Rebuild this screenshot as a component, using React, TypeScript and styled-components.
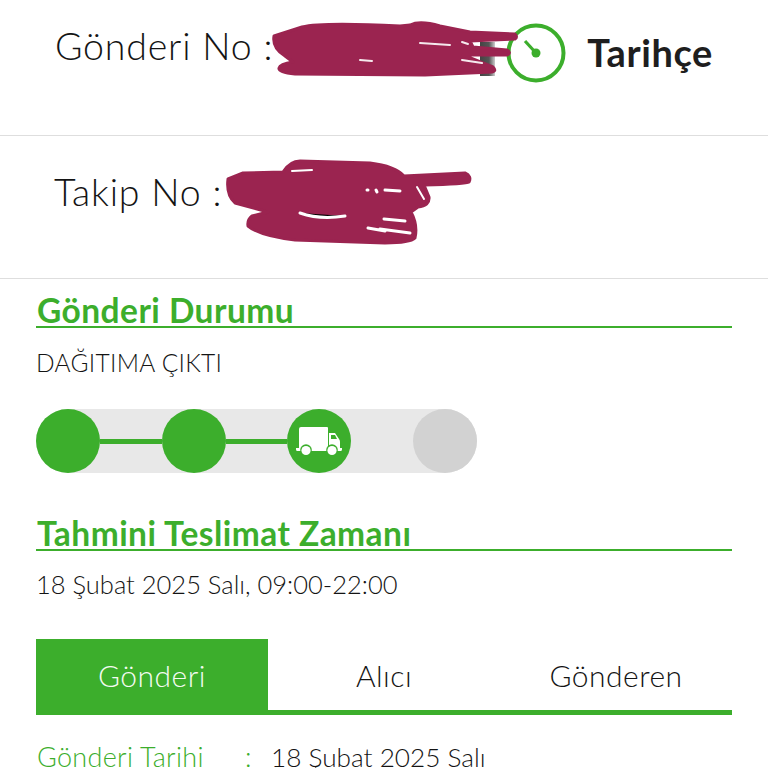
import React from "react";
import styled, { createGlobalStyle } from "styled-components";

const green = "#3cae2c";
const FONT = `"Lato", "Liberation Sans", sans-serif`;

const Global = createGlobalStyle`
  html, body { margin: 0; padding: 0; background: #fff; }
  body { width: 768px; height: 768px; overflow: hidden; font-family: ${FONT}; color: #222; }
`;

const Page = styled.div`
  position: relative;
  width: 768px;
  height: 768px;
  overflow: hidden;
`;

const TopRow = styled.div`
  height: 136px;
  box-sizing: border-box;
  border-bottom: 1px solid #dedede;
  padding: 22px 55px 0 55px;
  display: flex;
  align-items: flex-start;
`;

const TrackRow = styled.div`
  height: 143px;
  box-sizing: border-box;
  border-bottom: 1px solid #dedede;
  padding: 0 0 0 54px;
  display: flex;
  align-items: flex-start;
`;

const IdLabel = styled.div<{ $top?: number }>`
  font-size: 37.5px;
  font-weight: 300;
  line-height: 46px;
  letter-spacing: 0.8px;
  margin-top: ${(p) => p.$top ?? 0}px;
  color: #141414;
  white-space: nowrap;
`;

const HistoryLink = styled.div`
  margin-left: auto;
  display: flex;
  align-items: center;
  gap: 20px;
  height: 62px;
`;

const HistoryText = styled.span`
  font-size: 38px;
  font-weight: 700;
  color: #1e1e1e;
  letter-spacing: 0.6px;
  padding-bottom: 2px;
`;

const Content = styled.div`
  padding: 0 36px;
`;

const SectionTitle = styled.div<{ $top: number }>`
  margin-top: ${(p) => p.$top}px;
  height: 49px;
  box-sizing: border-box;
  border-bottom: 2px solid ${green};
  color: ${green};
  font-size: 33.5px;
  font-weight: 700;
  line-height: 62px;
  letter-spacing: 0.45px;
  white-space: nowrap;
  padding-left: 1px;
`;

const BodyText = styled.div<{ $top: number; $size: number; $spacing?: number }>`
  margin-top: ${(p) => p.$top}px;
  font-size: ${(p) => p.$size}px;
  font-weight: 300;
  line-height: 32px;
  letter-spacing: ${(p) => p.$spacing ?? 0}px;
  color: #141414;
  white-space: nowrap;
`;

const Stepper = styled.div`
  margin-top: 30px;
  width: 441px;
  height: 64px;
  border-radius: 32px;
  background: #e8e8e8;
  display: flex;
  align-items: center;
`;

const Step = styled.div<{ $done?: boolean }>`
  width: 64px;
  height: 64px;
  flex: none;
  border-radius: 50%;
  background: ${(p) => (p.$done ? green : "#d2d2d2")};
  display: flex;
  align-items: center;
  justify-content: center;
`;

const Connector = styled.div<{ $on?: boolean }>`
  flex: 1;
  height: 5px;
  background: ${(p) => (p.$on ? green : "transparent")};
`;

const Tabs = styled.div`
  margin-top: 39px;
  height: 76px;
  box-sizing: border-box;
  display: grid;
  grid-template-columns: repeat(3, 232px);
  border-bottom: 5px solid ${green};
`;

const Tab = styled.div<{ $active?: boolean }>`
  display: flex;
  align-items: center;
  justify-content: center;
  font-size: 30px;
  font-weight: 300;
  letter-spacing: 0.5px;
  box-sizing: border-box;
  background: ${(p) => (p.$active ? green : "transparent")};
  color: ${(p) => (p.$active ? "#f4fbf2" : "#141414")};
`;

const InfoRow = styled.div`
  margin-top: 31px;
  display: grid;
  grid-template-columns: 208px 26px auto;
  font-size: 27px;
  font-weight: 300;
  line-height: 22px;
  padding-left: 1px;
  white-space: nowrap;
`;

const InfoKey = styled.span`
  color: ${green};
  letter-spacing: 0.3px;
`;

const InfoColon = styled.span`
  color: ${green};
`;

const InfoValue = styled.span`
  color: #141414;
  font-size: 26.2px;
`;

const Redactions = styled.svg`
  position: absolute;
  left: 0;
  top: 0;
  pointer-events: none;
`;

const ClockIcon = () => (
  <svg width="62" height="62" viewBox="0 0 62 62" fill="none">
    <circle cx="31" cy="31" r="27.5" stroke={green} strokeWidth="4" />
    <path d="M20 19 L31 31" stroke={green} strokeWidth="3.2" />
    <circle cx="31" cy="31" r="4.5" fill={green} />
  </svg>
);

const TruckIcon = () => (
  <svg width="46" height="30" viewBox="0 0 46 30" fill="none">
    <path d="M5 1h26a1 1 0 0 1 1 1v20H3V3a2 2 0 0 1 2-2z" fill="#fff" />
    <path d="M33 7h6l4 6a4 4 0 0 1 1 3v6H33z" fill="#fff" />
    <path d="M35 9h4l2 4h-6z" fill={green} />
    <path d="M0 22h46v1.5a1.5 1.5 0 0 1-1.5 1.5H1.5A1.5 1.5 0 0 1 0 23.5z" fill="#fff" />
    <circle cx="10" cy="24" r="5.8" fill={green} />
    <circle cx="10" cy="24.5" r="4.6" fill="#fff" />
    <circle cx="36" cy="24" r="5.8" fill={green} />
    <circle cx="36" cy="24.5" r="4.6" fill="#fff" />
  </svg>
);

const ink = "#9b2450";

const Scribbles = () => (
  <Redactions width="768" height="768" viewBox="0 0 768 768">
    <defs>
      <linearGradient id="smudge" x1="0" x2="1" y1="0" y2="0">
        <stop offset="0" stopColor="#444" />
        <stop offset="0.6" stopColor="#555" />
        <stop offset="1" stopColor="#ccc" />
      </linearGradient>
    </defs>
    <rect x="480" y="42" width="15" height="34" fill="url(#smudge)" />
    <path
      fill={ink}
      stroke={ink}
      strokeWidth="3"
      strokeLinejoin="round"
      d="M274 36 L302 27 Q322 22 400 26 L410 25 Q420 20 440 26 L470 32 L515 34 Q518 37 515 39 L470 41 L473 47 L507 50 Q512 53 507 55 L463 55 L493 67 Q497 71 492 72 L425 75 L295 74 Q278 72 279 68 Q280 64 293 62 L285 56 Q272 48 274 36 Z"
    />
    <path d="M420 43 L450 45 M462 42 L468 44 M462 60 L482 63 M360 60 L372 61" stroke="#fff" strokeWidth="2" strokeLinecap="round" opacity="0.9" />
    <path
      fill={ink}
      stroke={ink}
      strokeWidth="3"
      strokeLinejoin="round"
      d="M228 179 L243 173 L283 172 Q290 161 300 161 L370 163 Q395 166 404 176 L465 173 Q472 176 469 182 Q466 184 424 185 L429 197 Q430 206 418 207 L411 212 Q418 225 415 238 Q410 243 385 243 L295 240 Q260 236 248 226 Q247 220 252 216 L268 212 L235 203 Q226 195 228 179 Z"
    />
    <path d="M292 171 L312 170 M417 187 L424 199" stroke="#fff" strokeWidth="2" strokeLinecap="round" />
    <path d="M385 190 L400 191 M376 190 L377 192 M367 190 L368 190" stroke="#fff" strokeWidth="3" strokeLinecap="round" />
    <path d="M300 213 Q320 220 345 216 M384 219 L405 221 M380 229 L410 233 M368 228 L385 231" stroke="#fff" strokeWidth="3" strokeLinecap="round" />
  </Redactions>
);

export default function App() {
  return (
    <Page>
      <Global />
      <TopRow>
        <IdLabel $top={1}>Gönderi No :</IdLabel>
        <HistoryLink>
          <ClockIcon />
          <HistoryText>Tarihçe</HistoryText>
        </HistoryLink>
      </TopRow>
      <TrackRow>
        <IdLabel $top={33}>Takip No :</IdLabel>
      </TrackRow>
      <Content>
        <SectionTitle $top={0}>Gönderi Durumu</SectionTitle>
        <BodyText $top={19} $size={24.5} $spacing={0.3}>DAĞITIMA ÇIKTI</BodyText>
        <Stepper>
          <Step $done />
          <Connector $on />
          <Step $done />
          <Connector $on />
          <Step $done>
            <TruckIcon />
          </Step>
          <Connector />
          <Step />
        </Stepper>
        <SectionTitle $top={29}>Tahmini Teslimat Zamanı</SectionTitle>
        <BodyText $top={17} $size={25.5}>18 Şubat 2025 Salı, 09:00-22:00</BodyText>
        <Tabs>
          <Tab $active>Gönderi</Tab>
          <Tab>Alıcı</Tab>
          <Tab>Gönderen</Tab>
        </Tabs>
        <InfoRow>
          <InfoKey>Gönderi Tarihi</InfoKey>
          <InfoColon>:</InfoColon>
          <InfoValue>18 Şubat 2025 Salı</InfoValue>
        </InfoRow>
      </Content>
      <Scribbles />
    </Page>
  );
}
